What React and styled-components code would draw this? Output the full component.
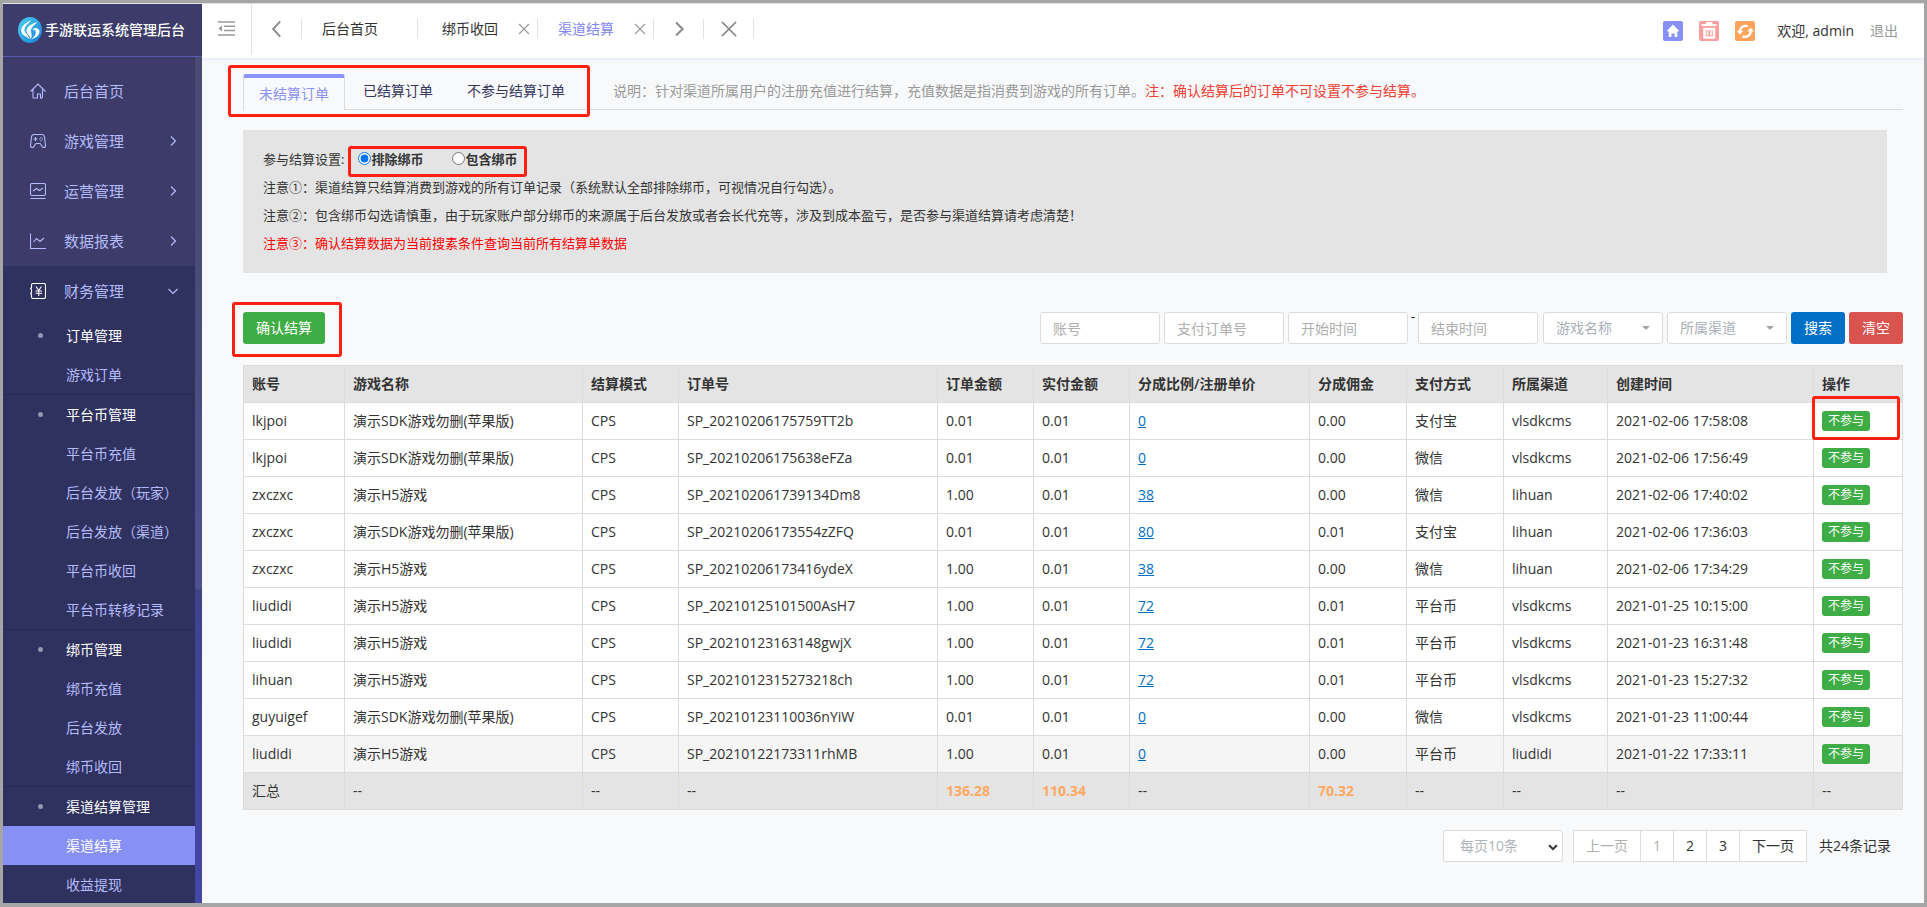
import React, { useState } from "react";
import styled, { createGlobalStyle, css } from "styled-components";

const GlobalStyle = createGlobalStyle`
	* {
		box-sizing: border-box;
	}
	body {
		margin: 0;
		color: #333;
		font-family: "Open Sans", "Noto Sans CJK SC", sans-serif;
		font-size: 14px;
		line-height: 20px;
	}
	button,
	input,
	select {
		font: inherit;
	}
	a {
		text-decoration: none;
	}
`;

const Frame = styled.div`
	display: flex;
	height: 100vh;
	padding-top: 1px;
	border: 3px solid #a5a5a5;
	border-bottom-width: 4px;
	background: #e4e4e4;
	overflow: hidden;
`;

/* red outline drawn over the marked controls */
const Marked = styled.div`
	position: relative;
	display: flex;
	align-items: center;
	width: fit-content;
	&::after {
		content: "";
		position: absolute;
		inset: ${({ $inset }) => $inset};
		border: 3px solid #ff2012;
		border-radius: 3px;
		pointer-events: none;
	}
`;

const Sidebar = styled.aside`
	display: flex;
	flex-direction: column;
	flex: 0 0 199px;
	background: linear-gradient(#3c3b69, #3b3c6f 35%, #4347a6);
`;
const Brand = styled.a`
	display: flex;
	align-items: center;
	gap: 3px;
	flex: 0 0 53px;
	padding-left: 15px;
	border-bottom: 1px solid #545bb0;
	background: #3c3b69;
	color: #fff;
	font-weight: 500;
`;
const SidebarBody = styled.div`
	display: flex;
	flex: 1;
	min-height: 0;
`;
const Menu = styled.nav`
	flex: 1;
	padding-top: 9px;
	background: #3c3b69;
	overflow: hidden;
`;
const Rail = styled.div`
	flex: 0 0 7px;
`;
const RailThumb = styled.div`
	height: 63%;
	border-radius: 0 0 4px 4px;
	background: rgba(255, 255, 255, 0.08);
`;
const MenuItem = styled.a`
	display: flex;
	align-items: center;
	height: 50px;
	padding: 0 15px 0 27px;
	color: #b5bcfb;
	font-size: 15px;
	svg:first-child {
		margin-right: 18px;
		color: ${({ $open }) => ($open ? "#fff" : "#b5bcfb")};
	}
	svg:last-child:not(:first-child) {
		margin-left: auto;
	}
`;
const OpenSection = styled.div`
	background: #2f315f;
`;
const SubGroup = styled.div`
	border-bottom: 1px solid #292a55;
`;
const SubTitle = styled.div`
	display: flex;
	align-items: center;
	height: 39px;
	padding-left: 35px;
	color: #fff;
	&::before {
		content: "";
		width: 5px;
		height: 5px;
		margin-right: 23px;
		border-radius: 50%;
		background: #9495b3;
	}
`;
const SubItem = styled.a`
	display: flex;
	align-items: center;
	height: 39px;
	padding-left: 63px;
	background: ${({ $active }) => ($active ? "#8790f4" : "transparent")};
	color: ${({ $active }) => ($active ? "#fff" : "#b5bcfb")};
`;

const Main = styled.div`
	display: flex;
	flex-direction: column;
	flex: 1;
	min-width: 0;
	background: #f8f9fb;
`;
const Header = styled.header`
	display: flex;
	flex: 0 0 54px;
	padding-right: 26px;
	background: #fff;
	box-shadow: 0 1px 4px rgba(90, 120, 230, 0.14);
`;
const Toggle = styled.button`
	width: 50px;
	height: 50px;
	padding: 4px 0 0 16px;
	border: 0;
	border-right: 1px solid #e2e2e2;
	background: none;
	color: #999;
	text-align: left;
`;
const PageTabs = styled.div`
	display: flex;
	align-items: center;
	height: 50px;
`;
const NavButton = styled.button`
	display: flex;
	align-items: center;
	justify-content: center;
	width: 50px;
	height: 20px;
	padding: 0;
	border: 0;
	border-right: 1px solid #e2e2e2;
	background: none;
	color: #8c8c8c;
`;
const PageTab = styled.div`
	display: flex;
	align-items: center;
	justify-content: space-between;
	width: 116px;
	height: 20px;
	margin-right: ${({ $home }) => ($home ? "4px" : 0)};
	padding: 0 6px 0 20px;
	border-right: 1px solid #e2e2e2;
	a {
		color: ${({ $active }) => ($active ? "#7f86f3" : "#333")};
	}
`;
const CloseTab = styled.button`
	display: flex;
	padding: 0;
	border: 0;
	background: none;
	color: #999;
`;
const HeaderTools = styled.div`
	display: flex;
	align-items: center;
	margin-left: auto;
	gap: 16px;
`;
const ToolButton = styled.button`
	display: flex;
	width: 20px;
	height: 20px;
	padding: 0;
	border: 0;
	border-radius: 2px;
	background: ${({ $color }) => $color};
	color: #fff;
`;
const Welcome = styled.span`
	margin-left: 6px;
`;
const Logout = styled.a`
	color: #999;
`;

const Content = styled.main`
	padding: 16px 21px 0 41px;
`;
const TabBar = styled.div`
	display: flex;
	border-bottom: 1px solid #dcdcdc;
`;
const TabGroup = styled(Marked)`
	gap: 2px;
	margin-bottom: -1px;
`;
const Tab = styled.a`
	height: 36px;
	padding: 0 15px;
	border: 1px solid transparent;
	border-width: 0 1px;
	color: #36365f;
	line-height: 34px;
	${({ $active }) =>
		$active &&
		css`
			border-color: #dcdcdc;
			border-top: 4px solid #8c93f6;
			border-radius: 3px 3px 0 0;
			background: #f8f9fb;
			color: #8c93f6;
			line-height: 32px;
		`}
`;
const TabNote = styled.p`
	margin: 0 0 0 32px;
	color: #999;
	line-height: 34px;
`;
const TabWarning = styled.span`
	color: #ee4033;
`;

const Settings = styled.section`
	margin: 20px 16px 0 0;
	padding: 15px 20px 16px;
	background: #e4e4e4;
	font-size: 13px;
	line-height: 28px;
`;
const SettingLine = styled.p`
	margin: 0;
	color: ${({ $danger }) => ($danger ? "#f00" : "#333")};
`;
const ModeRow = styled.div`
	display: flex;
	gap: 14px;
	height: 28px;
`;
const ModeOptions = styled(Marked)`
	gap: 29px;
`;
const ModeLabel = styled.label`
	display: flex;
	align-items: center;
	font-weight: 600;
	input {
		margin: 0 0 2px;
	}
`;

const Toolbar = styled.div`
	display: flex;
	align-items: center;
	justify-content: space-between;
	margin: 39px 0 21px;
`;
const Button = styled.button`
	height: 32px;
	padding: 0 13px;
	border: 0;
	border-radius: 3px;
	background: ${({ $color }) => $color};
	color: #fff;
`;
const Filters = styled.form`
	display: flex;
	gap: 4px;
`;
const fieldStyle = css`
	width: 120px;
	height: 32px;
	padding: 0 12px;
	border: 1px solid #dcdcdc;
	border-radius: 3px;
	background: #fff;
`;
const Field = styled.input`
	${fieldStyle}
	&::placeholder {
		color: #aeaeae;
	}
`;
const DateRange = styled.div`
	display: flex;
	margin-right: 1px;
	span {
		width: 10px;
		line-height: 10px;
		text-align: center;
	}
`;
const SelectWrap = styled.div`
	position: relative;
	&::after {
		content: "";
		position: absolute;
		top: 14px;
		right: 13px;
		border: 4px solid transparent;
		border-top-color: #a3a8ad;
		border-bottom: 0;
		pointer-events: none;
	}
`;
const FilterSelect = styled.select`
	${fieldStyle}
	appearance: none;
	color: #a9b0b8;
`;

const OrdersTable = styled.table`
	width: 100%;
	border-collapse: collapse;
	table-layout: fixed;
	background: #fff;
	th,
	td {
		padding: 8px;
		border: 1px solid #dcdcdc;
		text-align: left;
		vertical-align: top;
		white-space: nowrap;
	}
	th {
		background: #e4e4e4;
		font-weight: 600;
	}
`;
const Row = styled.tr`
	background: ${({ $hover }) => ($hover ? "#f5f5f5" : "#fff")};
`;
const TotalRow = styled.tr`
	background: #e4e4e4;
`;
const TotalValue = styled.span`
	color: #ffa860;
	font-weight: 700;
`;
const RateLink = styled.a`
	color: #0270c7;
	text-decoration: underline;
`;
const SkipButton = styled.button`
	display: block;
	height: 20px;
	padding: 0 6px;
	border: 0;
	border-radius: 3px;
	background: #3fad46;
	color: #fff;
	font-size: 12px;
	line-height: 20px;
`;

const Pagination = styled.div`
	display: flex;
	align-items: center;
	justify-content: flex-end;
	margin-top: 20px;
	padding-right: 12px;
`;
const PageSizeWrap = styled.div`
	position: relative;
	margin-right: 10px;
	svg {
		position: absolute;
		top: 11px;
		right: 4px;
		color: #333;
		pointer-events: none;
	}
`;
const PageSize = styled.select`
	${fieldStyle}
	padding: 0 16px;
	appearance: none;
	color: #aeb4ba;
`;
const PageList = styled.nav`
	display: flex;
	margin-right: 12px;
	border-left: 1px solid #dcdcdc;
`;
const PageLink = styled.a`
	height: 32px;
	padding: 0 12px;
	border: 1px solid #dcdcdc;
	border-left: 0;
	background: #fff;
	color: ${({ $muted }) => ($muted ? "#b0b0b0" : "#333")};
	line-height: 30px;
`;

const MENU = [
	{ label: "后台首页", icon: "home" },
	{ label: "游戏管理", icon: "gamepad", arrow: "right" },
	{ label: "运营管理", icon: "monitor", arrow: "right" },
	{ label: "数据报表", icon: "chart", arrow: "right" },
];

const FINANCE_GROUPS = [
	{ title: "订单管理", items: ["游戏订单"] },
	{
		title: "平台币管理",
		items: ["平台币充值", "后台发放（玩家）", "后台发放（渠道）", "平台币收回", "平台币转移记录"],
	},
	{ title: "绑币管理", items: ["绑币充值", "后台发放", "绑币收回"] },
	{ title: "渠道结算管理", items: ["渠道结算", "收益提现"] },
];

const COLUMNS = [
	{ label: "账号", width: 101 },
	{ label: "游戏名称", width: 238 },
	{ label: "结算模式", width: 96 },
	{ label: "订单号", width: 259 },
	{ label: "订单金额", width: 96 },
	{ label: "实付金额", width: 96 },
	{ label: "分成比例/注册单价", width: 180 },
	{ label: "分成佣金", width: 97 },
	{ label: "支付方式", width: 97 },
	{ label: "所属渠道", width: 104 },
	{ label: "创建时间", width: 206 },
	{ label: "操作", width: 89 },
];

const SDK_GAME = "演示SDK游戏勿删(苹果版)";
const H5_GAME = "演示H5游戏";

const ORDERS = [
	["lkjpoi", SDK_GAME, "SP_20210206175759TT2b", "0.01", "0", "0.00", "支付宝", "vlsdkcms", "2021-02-06 17:58:08"],
	["lkjpoi", SDK_GAME, "SP_20210206175638eFZa", "0.01", "0", "0.00", "微信", "vlsdkcms", "2021-02-06 17:56:49"],
	["zxczxc", H5_GAME, "SP_202102061739134Dm8", "1.00", "38", "0.00", "微信", "lihuan", "2021-02-06 17:40:02"],
	["zxczxc", SDK_GAME, "SP_20210206173554zZFQ", "0.01", "80", "0.01", "支付宝", "lihuan", "2021-02-06 17:36:03"],
	["zxczxc", H5_GAME, "SP_20210206173416ydeX", "1.00", "38", "0.00", "微信", "lihuan", "2021-02-06 17:34:29"],
	["liudidi", H5_GAME, "SP_20210125101500AsH7", "1.00", "72", "0.01", "平台币", "vlsdkcms", "2021-01-25 10:15:00"],
	["liudidi", H5_GAME, "SP_20210123163148gwjX", "1.00", "72", "0.01", "平台币", "vlsdkcms", "2021-01-23 16:31:48"],
	["lihuan", H5_GAME, "SP_2021012315273218ch", "1.00", "72", "0.01", "平台币", "vlsdkcms", "2021-01-23 15:27:32"],
	["guyuigef", SDK_GAME, "SP_20210123110036nYiW", "0.01", "0", "0.00", "微信", "vlsdkcms", "2021-01-23 11:00:44"],
	["liudidi", H5_GAME, "SP_20210122173311rhMB", "1.00", "0", "0.00", "平台币", "liudidi", "2021-01-22 17:33:11"],
];

const TOTALS = ["汇总", "--", "--", "--", "136.28", "110.34", "--", "70.32", "--", "--", "--", "--"];

const MENU_PATHS = {
	home: "M.5 8.5 8 1l7.5 7.500M3 6.500V14q0 1 1 1h3.500v-4h3v4h.500q1.500 0 1.500-1V6.500",
	gamepad:
		"M4 1.500h8q2 0 2.500 2.500l1 8.500q0 2-2 2-1 0-1.500-1l-1-2q-.5-1-1.500-1h-3q-1 0-1.500 1l-1 2q-.5 1-1.500 1-2 0-2-2L1.500 4q.5-2.500 2.500-2.500zM5.500 4v4M3.500 6h4M11 4v1.200M9.200 6h1.200M11.800 6H13M11 7v1.200",
	monitor: "M2 .5h12q1.500 0 1.500 1.500v9q0 1.500-1.500 1.500H2q-1.500 0-1.500-1.500V2Q.5.5 2 .5zM.5 15.500h15M3 8l3.500-2.500 3 2L13 5",
	chart: "M.5.500v15H16M3.500 9l3-3.500 3.500 3L14 5",
	money:
		"M3 .500h11q1.500 0 1.500 1.500v12q0 1.500-1.500 1.500H3q-1.500 0-1.500-1.500v-2.500L.500 10.500l1-1v-3l-1-1 1-1V2Q1.500.500 3 .500zM6 3.500l2.700 4 2.700-4M5.500 8h6.500M5.500 10.200h6.500M8.700 7.500V13",
};

const MenuIcon = ({ name }) => (
	<svg width="16" height="16" viewBox="0 0 16 16" fill="none" stroke="currentColor" strokeWidth="1.1">
		<path d={MENU_PATHS[name]} />
	</svg>
);

const ARROWS = {
	right: "M5 2.500l4.500 4.500L5 11.500",
	left: "M9.500 1L4 7l5.500 6",
	down: "M2.500 5L7 9.500 11.500 5",
	close: "M2 2l10 10M12 2L2 12",
};

const Arrow = ({ name, size = 14, stroke = 1.2 }) => (
	<svg width={size} height={size} viewBox="0 0 14 14" fill="none" stroke="currentColor" strokeWidth={stroke}>
		<path d={ARROWS[name]} />
	</svg>
);

const BrandLogo = () => (
	<svg width="24" height="26" viewBox="0 0 24 26">
		<defs>
			<linearGradient id="brand" x1="0" y1="0" x2="1" y2="1">
				<stop offset="0" stopColor="#4fd0f5" />
				<stop offset="1" stopColor="#1580d6" />
			</linearGradient>
		</defs>
		<ellipse cx="12" cy="13" rx="12" ry="13" fill="url(#brand)" />
		<path d="M13.500 3C7 6 2 10 3.500 15c1 3.500 5 4.500 8 7-.500-4-5-5.500-5-9 0-4 4-6.500 7-10z" fill="#fff" />
		<path d="M19 5C13 7 8 10 8.500 14.500c.5 3 3.500 3.500 4 7.500 2-2.500 1-5 .500-7.500-.500-4 3.500-6 6-9.500z" fill="#fff" />
		<path d="M14.500 12.500c2.500-2.500 7-1.500 7 2 0 4.500-4.500 6.500-8.500 8 3-2.500 4.800-4.500 4.800-7 0-2-1.300-2.800-3.300-3z" fill="#fff" />
	</svg>
);

const ToggleIcon = () => (
	<svg width="17" height="15" viewBox="0 0 17 15" fill="none" stroke="currentColor" strokeWidth="1.4">
		<path d="M0 1h17M6 5.300h11M6 9.500h11M0 14h17" />
		<path d="M4 4.500v6L.5 7.500z" fill="currentColor" stroke="none" />
	</svg>
);

const HomeGlyph = () => (
	<svg width="20" height="20" viewBox="0 0 20 20" fill="currentColor">
		<path d="M10 3.500l6 6.200-.7.800h-1v5.500h-2.800v-3.500h-3V16H5.700v-5.500h-1l-.7-.8z" />
	</svg>
);
const TrashGlyph = () => (
	<svg width="20" height="20" viewBox="0 0 20 20" fill="none" stroke="currentColor">
		<path d="M2.500 4h15M8 3.500V2h4.500v1.500" strokeWidth="1.800" />
		<path d="M5.500 8h9.500v8.500H5.500z" strokeWidth="2.500" />
		<path d="M8.500 9.500v5M12 9.500v5" strokeWidth="1.500" />
	</svg>
);
const RefreshGlyph = () => (
	<svg width="20" height="20" viewBox="0 0 20 20" fill="none" stroke="currentColor" strokeWidth="2.400">
		<path d="M12.800 5.200C8.500 4 5 6.500 4.800 10.500M7.500 15.500C12 17 15.800 14 15.800 9.800" />
		<path d="M1.500 9.800h6.800L5 13.500zM12.200 10.500H19L15.700 6.500z" fill="currentColor" stroke="none" />
	</svg>
);

const renderSubGroup = ({ title, items }) => (
	<SubGroup key={title}>
		<SubTitle>{title}</SubTitle>
		{items.map((item) => (
			<SubItem key={item} href="#" $active={item === "渠道结算"}>
				{item}
			</SubItem>
		))}
	</SubGroup>
);

const SideMenu = () => (
	<Sidebar>
		<Brand href="#">
			<BrandLogo />
			手游联运系统管理后台
		</Brand>
		<SidebarBody>
			<Menu>
				{MENU.map(({ label, icon, arrow }) => (
					<MenuItem key={label} href="#">
						<MenuIcon name={icon} />
						{label}
						{arrow && <Arrow name={arrow} />}
					</MenuItem>
				))}
				<OpenSection>
					<MenuItem href="#" $open>
						<MenuIcon name="money" />
						财务管理
						<Arrow name="down" />
					</MenuItem>
					{FINANCE_GROUPS.map(renderSubGroup)}
				</OpenSection>
			</Menu>
			<Rail>
				<RailThumb />
			</Rail>
		</SidebarBody>
	</Sidebar>
);

const TopBar = () => (
	<Header>
		<Toggle type="button" aria-label="收起菜单">
			<ToggleIcon />
		</Toggle>
		<PageTabs>
			<NavButton type="button" aria-label="向左">
				<Arrow name="left" size={18} stroke={1.5} />
			</NavButton>
			<PageTab $home>
				<a href="#">后台首页</a>
			</PageTab>
			<PageTab>
				<a href="#">绑币收回</a>
				<CloseTab type="button" aria-label="关闭绑币收回">
					<Arrow name="close" size={14} stroke={1.1} />
				</CloseTab>
			</PageTab>
			<PageTab $active>
				<a href="#">渠道结算</a>
				<CloseTab type="button" aria-label="关闭渠道结算">
					<Arrow name="close" size={14} stroke={1.1} />
				</CloseTab>
			</PageTab>
			<NavButton type="button" aria-label="向右">
				<Arrow name="right" size={20} stroke={1.5} />
			</NavButton>
			<NavButton type="button" aria-label="关闭全部">
				<Arrow name="close" size={20} stroke={1.1} />
			</NavButton>
		</PageTabs>
		<HeaderTools>
			<ToolButton type="button" $color="#8790f4" aria-label="首页">
				<HomeGlyph />
			</ToolButton>
			<ToolButton type="button" $color="#ff9c9c" aria-label="清除缓存">
				<TrashGlyph />
			</ToolButton>
			<ToolButton type="button" $color="#ffa45c" aria-label="刷新">
				<RefreshGlyph />
			</ToolButton>
			<Welcome>欢迎, admin</Welcome>
			<Logout href="#">退出</Logout>
		</HeaderTools>
	</Header>
);

const SettlementSettings = () => {
	const [mode, setMode] = useState("exclude");

	return (
		<Settings>
			<ModeRow>
				<span>参与结算设置:</span>
				<ModeOptions $inset="1px -10px -4px -10px">
					<ModeLabel>
						<input type="radio" name="mode" checked={mode === "exclude"} onChange={() => setMode("exclude")} />
						排除绑币
					</ModeLabel>
					<ModeLabel>
						<input type="radio" name="mode" checked={mode === "include"} onChange={() => setMode("include")} />
						包含绑币
					</ModeLabel>
				</ModeOptions>
			</ModeRow>
			<SettingLine>注意①：渠道结算只结算消费到游戏的所有订单记录（系统默认全部排除绑币，可视情况自行勾选）。</SettingLine>
			<SettingLine>
				注意②：包含绑币勾选请慎重，由于玩家账户部分绑币的来源属于后台发放或者会长代充等，涉及到成本盈亏，是否参与渠道结算请考虑清楚！
			</SettingLine>
			<SettingLine $danger>注意③：确认结算数据为当前搜素条件查询当前所有结算单数据</SettingLine>
		</Settings>
	);
};

const renderOrder = ([account, game, orderNo, amount, rate, commission, payType, channel, time], index) => (
	<Row key={orderNo} $hover={index === ORDERS.length - 1}>
		<td>{account}</td>
		<td>{game}</td>
		<td>CPS</td>
		<td>{orderNo}</td>
		<td>{amount}</td>
		<td>0.01</td>
		<td>
			<RateLink href="#">{rate}</RateLink>
		</td>
		<td>{commission}</td>
		<td>{payType}</td>
		<td>{channel}</td>
		<td>{time}</td>
		<td>
			{index === 0 ? (
				<Marked $inset="-15px -30px -9px -10px">
					<SkipButton type="button">不参与</SkipButton>
				</Marked>
			) : (
				<SkipButton type="button">不参与</SkipButton>
			)}
		</td>
	</Row>
);

const Orders = () => (
	<OrdersTable>
		<colgroup>
			{COLUMNS.map(({ label, width }) => (
				<col key={label} width={width} />
			))}
		</colgroup>
		<thead>
			<tr>
				{COLUMNS.map(({ label }) => (
					<th key={label}>{label}</th>
				))}
			</tr>
		</thead>
		<tbody>
			{ORDERS.map(renderOrder)}
			<TotalRow>
				{TOTALS.map((value, index) => (
					<td key={`total_${index}`}>{value.includes(".") ? <TotalValue>{value}</TotalValue> : value}</td>
				))}
			</TotalRow>
		</tbody>
	</OrdersTable>
);

const App = () => (
	<Frame>
		<GlobalStyle />
		<SideMenu />
		<Main>
			<TopBar />
			<Content>
				<TabBar>
					<TabGroup $inset="-9px -9px -7px -15px">
						<Tab href="#" $active>
							未结算订单
						</Tab>
						<Tab href="#">已结算订单</Tab>
						<Tab href="#">不参与结算订单</Tab>
					</TabGroup>
					<TabNote>
						说明：针对渠道所属用户的注册充值进行结算，充值数据是指消费到游戏的所有订单。
						<TabWarning>注：确认结算后的订单不可设置不参与结算。</TabWarning>
					</TabNote>
				</TabBar>
				<SettlementSettings />
				<Toolbar>
					<Marked $inset="-10px -17px -13px -11px">
						<Button type="button" $color="#3fad46">
							确认结算
						</Button>
					</Marked>
					<Filters>
						<Field placeholder="账号" aria-label="账号" />
						<Field placeholder="支付订单号" aria-label="支付订单号" />
						<DateRange>
							<Field placeholder="开始时间" aria-label="开始时间" />
							<span>-</span>
							<Field placeholder="结束时间" aria-label="结束时间" />
						</DateRange>
						<SelectWrap>
							<FilterSelect aria-label="游戏名称">
								<option>游戏名称</option>
							</FilterSelect>
						</SelectWrap>
						<SelectWrap>
							<FilterSelect aria-label="所属渠道">
								<option>所属渠道</option>
							</FilterSelect>
						</SelectWrap>
						<Button type="button" $color="#0270c7">
							搜索
						</Button>
						<Button type="button" $color="#d9534f">
							清空
						</Button>
					</Filters>
				</Toolbar>
				<Orders />
				<Pagination>
					<PageSizeWrap>
						<PageSize aria-label="每页条数">
							<option>每页10条</option>
						</PageSize>
						<Arrow name="down" size={12} stroke={2.4} />
					</PageSizeWrap>
					<PageList>
						<PageLink $muted>上一页</PageLink>
						<PageLink $muted>1</PageLink>
						<PageLink href="#">2</PageLink>
						<PageLink href="#">3</PageLink>
						<PageLink href="#">下一页</PageLink>
					</PageList>
					<span>共24条记录</span>
				</Pagination>
			</Content>
		</Main>
	</Frame>
);

export default App;
